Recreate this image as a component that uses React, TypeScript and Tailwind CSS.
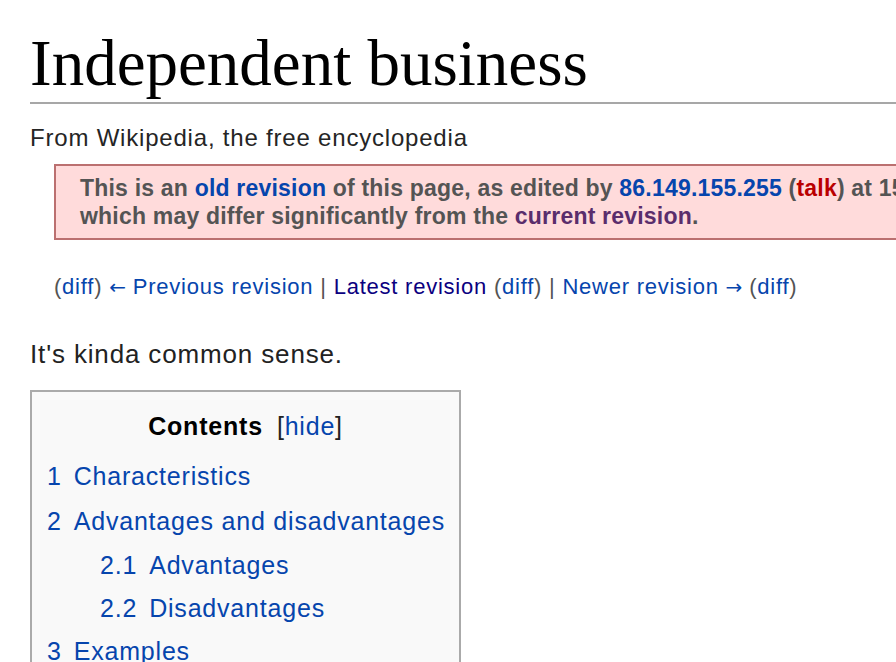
import React from "react";

const sans = "font-['Liberation_Sans',Arial,sans-serif]";

function TocRow({
  num,
  label,
  sub,
  h,
}: {
  num: string;
  label: string;
  sub?: boolean;
  h: string;
}) {
  return (
    <div className={`flex items-center ${h} ${sub ? "pl-[53px]" : ""}`}>
      <span className="text-[#0645ad] mr-[12px]">{num}</span>
      <span className="text-[#0645ad]">{label}</span>
    </div>
  );
}

function Arrow({ dir }: { dir: "left" | "right" }) {
  return (
    <span className="font-['DejaVu_Sans',sans-serif] text-[20px] tracking-normal">
      {dir === "left" ? "\u2190" : "\u2192"}
    </span>
  );
}

export default function App() {
  return (
    <div className="w-[896px] h-[662px] overflow-hidden bg-white relative">
      <div className="w-[1000px] pl-[30px]">
        {/* Title */}
        <div className="pt-[31px] pb-[6px] border-b-2 border-[#a7a7a7]">
          <h1 className="font-['Liberation_Serif','Times_New_Roman',serif] text-[65px] leading-[65px] text-black font-normal">
            Independent business
          </h1>
        </div>

        {/* Tagline */}
        <div
          className={`${sans} mt-[18px] h-[31px] flex items-center text-[24px] tracking-[0.8px] text-[#252525]`}
        >
          From Wikipedia, the free encyclopedia
        </div>

        {/* Notice */}
        <div
          className={`${sans} mt-[11px] ml-[24px] w-[900px] border-2 border-[#bb7070] bg-[#ffdbdb] pl-[24px] py-[8px] text-[23px] leading-[28px] font-bold tracking-[0.2px] text-[#545454]`}
        >
          <div className="whitespace-nowrap">
            This is an <span className="text-[#0645ad]">old revision</span> of
            this page, as edited by{" "}
            <span className="text-[#0645ad]">86.149.155.255</span> (
            <span className="text-[#ba0000]">talk</span>) at 15:27, 3 March
            2016
          </div>
          <div className="whitespace-nowrap">
            which may differ significantly from the{" "}
            <span className="text-[#5a2d6c]">current revision</span>.
          </div>
        </div>

        {/* Nav */}
        <div
          className={`${sans} mt-[31px] ml-[24px] h-[30px] flex items-center whitespace-pre text-[22px] tracking-[0.77px] text-[#545454]`}
        >
          <span>(</span>
          <span className="text-[#0645ad]">diff</span>
          <span>) </span>
          <span className="text-[#0645ad]">
            <Arrow dir="left" /> Previous revision
          </span>
          <span> | </span>
          <span className="text-[#0b0080]">Latest revision</span>
          <span> (</span>
          <span className="text-[#0645ad]">diff</span>
          <span>) | </span>
          <span className="text-[#0645ad]">
            Newer revision <Arrow dir="right" />
          </span>
          <span> (</span>
          <span className="text-[#0645ad]">diff</span>
          <span>)</span>
        </div>

        {/* Body text */}
        <div
          className={`${sans} mt-[37px] h-[32px] flex items-center text-[26px] tracking-[0.85px] text-[#222222]`}
        >
          It's kinda common sense.
        </div>

        {/* TOC */}
        <div
          className={`${sans} mt-[20px] w-[431px] h-[300px] border-2 border-[#aaaaaa] bg-[#f9f9f9] pt-[13px] pl-[15px] text-[25px] tracking-[0.8px]`}
        >
          <div className="h-[44px] flex items-center justify-center pr-[15px]">
            <span className="font-bold text-black">Contents</span>
            <span className="ml-[14px] text-[#222222]">
              [<span className="text-[#0645ad]">hide</span>]
            </span>
          </div>
          <div className="mt-[5px]">
            <TocRow num="1" label="Characteristics" h="h-[46px]" />
            <TocRow num="2" label="Advantages and disadvantages" h="h-[44px]" />
            <TocRow num="2.1" label="Advantages" sub h="h-[43px]" />
            <TocRow num="2.2" label="Disadvantages" sub h="h-[44px]" />
            <TocRow num="3" label="Examples" h="h-[42px]" />
          </div>
        </div>
      </div>
    </div>
  );
}
